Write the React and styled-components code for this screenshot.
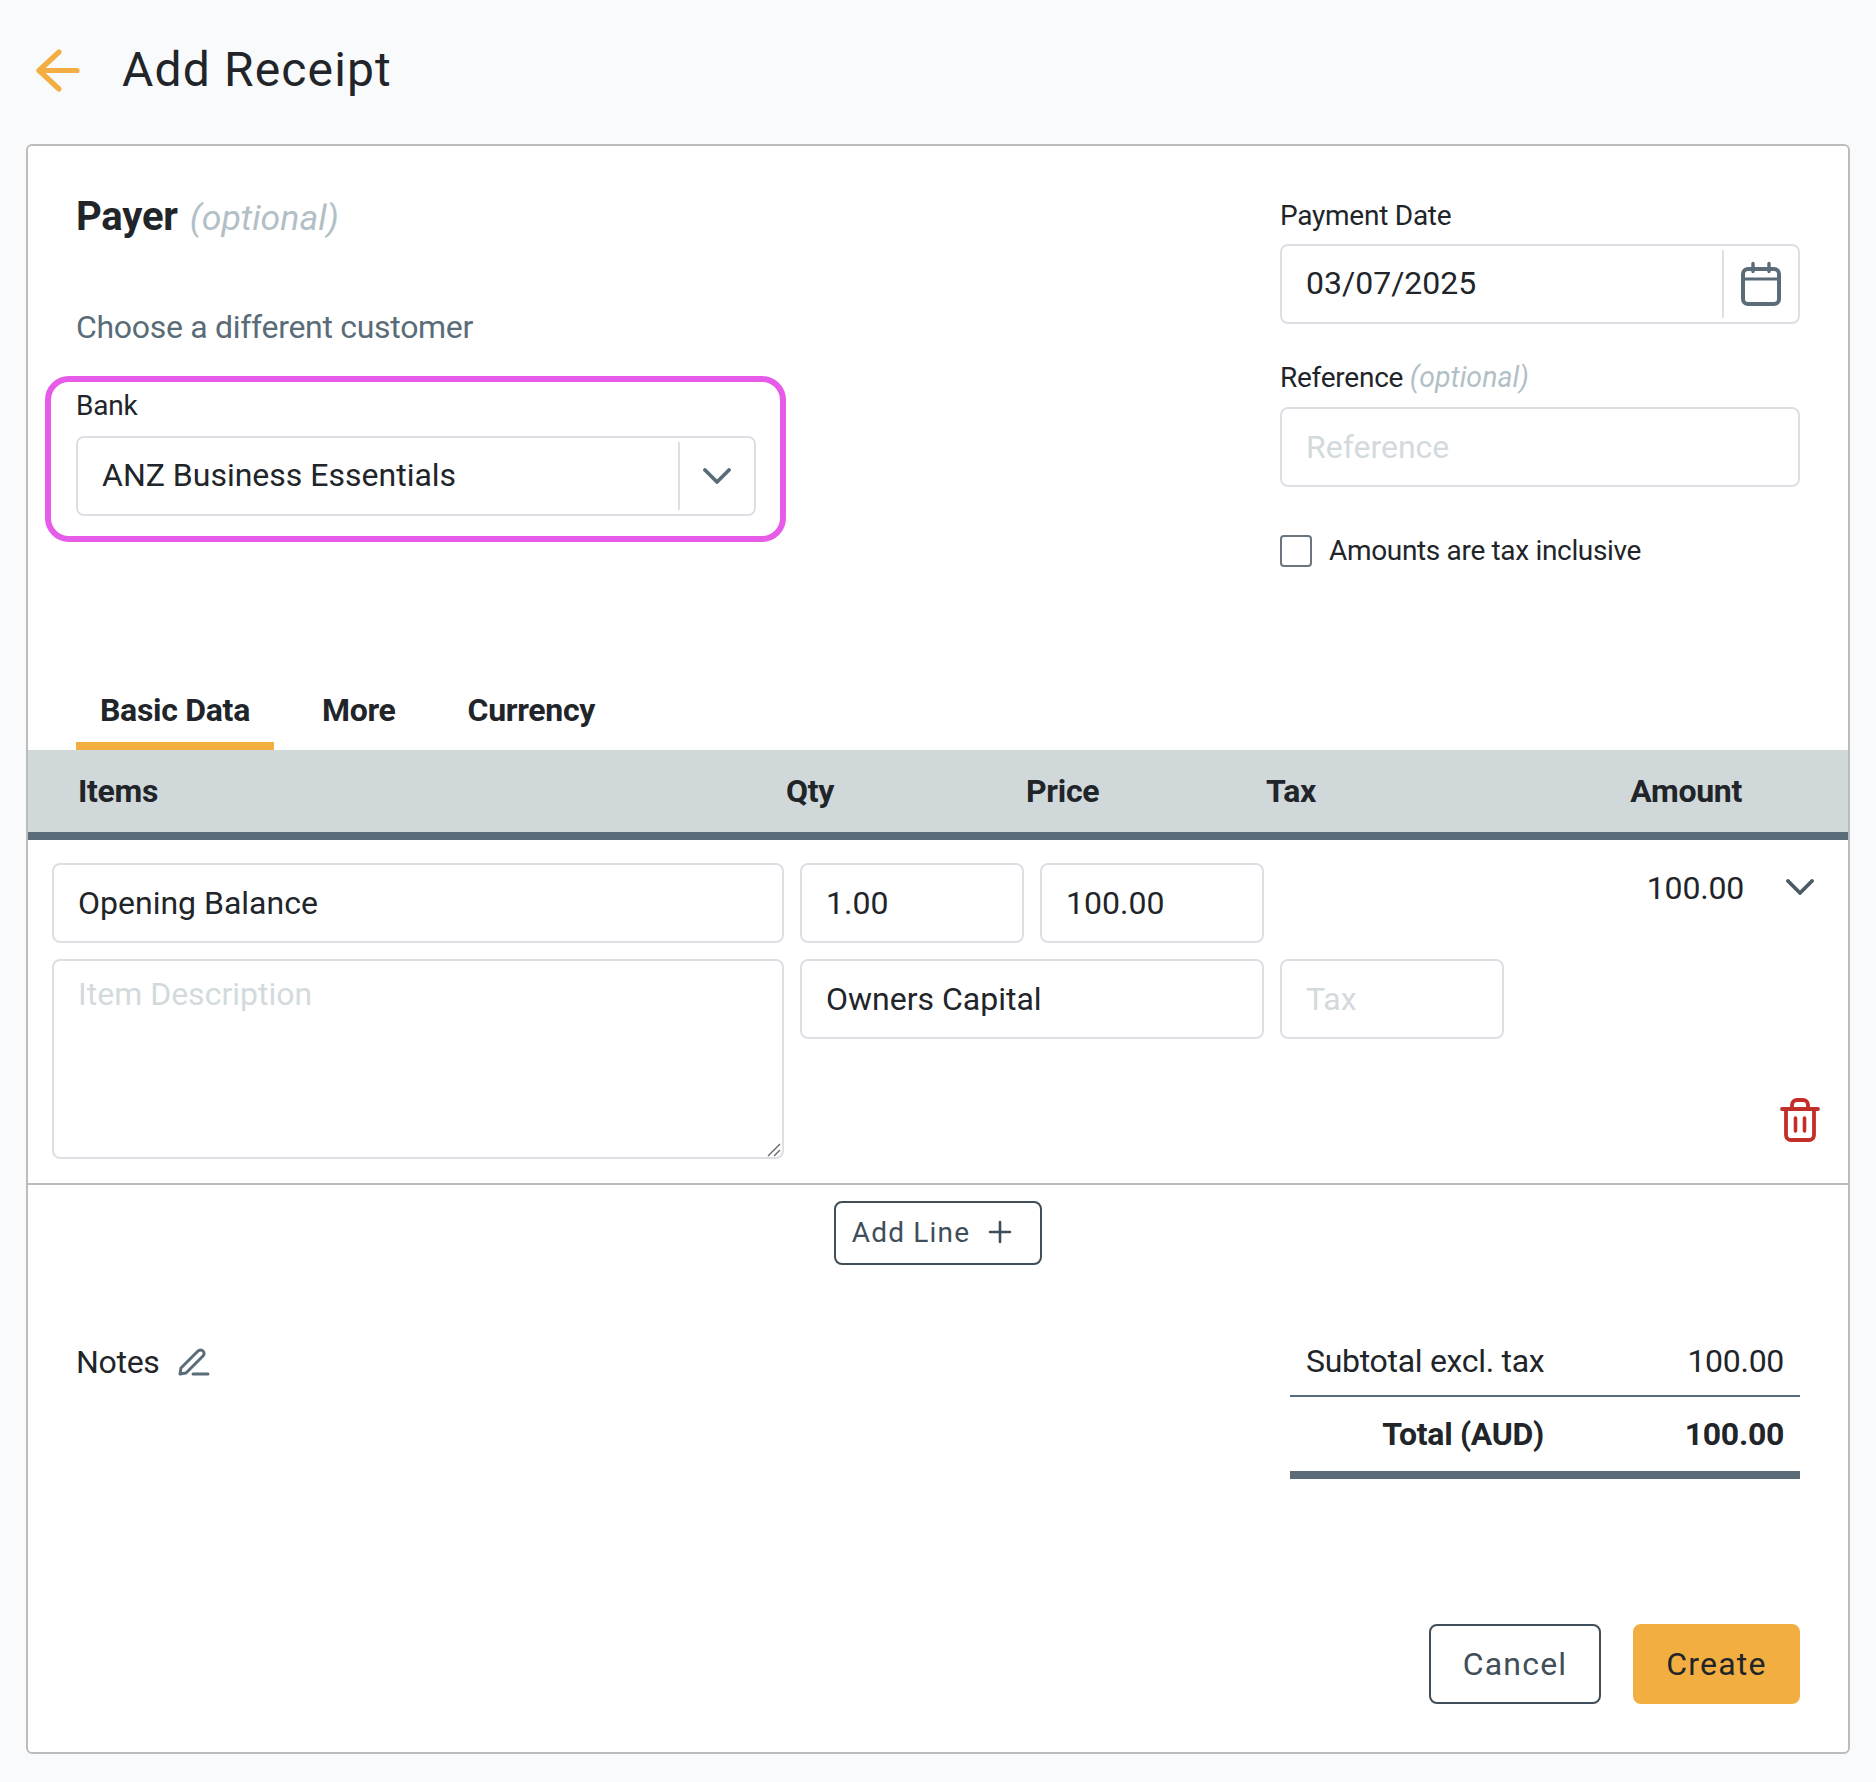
import React from "react";
import styled, { createGlobalStyle } from "styled-components";

const Global = createGlobalStyle`
  html, body { margin: 0; padding: 0; background: #f9fafb; }
  * { box-sizing: border-box; }
  body { font-family: Roboto, "Liberation Sans", sans-serif; color: #212529; }
  input::placeholder, textarea::placeholder { color: #d3dadd; opacity: 1; }
`;

const Page = styled.div`
  width: 1876px;
  height: 1782px;
  padding: 0 26px;
`;
const Header = styled.header`
  height: 144px;
  display: flex;
  align-items: center;
  padding: 0 0 5px 9px;
  gap: 41px;
`;
const Title = styled.h1`
  margin: 0;
  font-size: 48px;
  font-weight: 400;
  line-height: 56px;
  letter-spacing: 1.15px;
`;
const Card = styled.main`
  height: 1610px;
  background: #fff;
  border: 2px solid #bcbcbc;
  border-radius: 6px;
  display: flex;
  flex-direction: column;
`;
const Top = styled.section`
  height: 604px;
  padding: 0 48px;
  display: flex;
  justify-content: space-between;
`;
const LeftCol = styled.div`
  width: 740px;
  padding-top: 47px;
`;
const RightCol = styled.div`
  width: 520px;
  padding-top: 53px;
`;
const SectionTitle = styled.h2`
  margin: 0;
  font-size: 40px;
  font-weight: 700;
  line-height: 48px;
  letter-spacing: -0.2px;
  display: flex;
  align-items: baseline;
  gap: 12px;
`;
const Optional = styled.em`
  font-weight: 400;
  font-style: italic;
  color: #b2bfc6;
  letter-spacing: 0;
  font-size: ${(p) => p.$size || 35.7}px;
`;
const Choose = styled.a`
  display: block;
  margin: 65px 0 0;
  font-size: 32px;
  line-height: 40px;
  letter-spacing: -0.3px;
  color: #5a6c78;
`;
const Highlight = styled.div`
  margin: 29px 0 0 -31px;
  width: 741px;
  height: 166px;
  border: 6px solid #e65be8;
  border-radius: 24px;
  padding: 7px 24px 0 25px;
`;
const Label = styled.label`
  display: block;
  font-size: 28px;
  line-height: 34px;
  letter-spacing: -0.25px;
  margin-bottom: ${(p) => p.$mb || 11}px;
`;
const FieldBox = styled.div`
  height: 80px;
  display: flex;
  align-items: center;
  border: 2px solid #dcdfe4;
  border-radius: 8px;
  background: #fff;
  padding: 4px 0;
`;
const FieldValue = styled.span`
  flex: 1;
  padding: 0 0 2px 24px;
  font-size: 32px;
  line-height: 40px;
`;
const Addon = styled.span`
  height: 100%;
  width: ${(p) => p.$w}px;
  border-left: 2px solid #dcdfe4;
  display: flex;
  align-items: center;
  justify-content: center;
`;
const TextInput = styled.input`
  display: block;
  width: 100%;
  height: 80px;
  border: 2px solid #dcdfe4;
  border-radius: 8px;
  background: #fff;
  padding: 0 24px;
  font: 400 32px Roboto, sans-serif;
  color: #212529;
  outline: none;
`;
const FieldGroup = styled.div`
  margin-top: ${(p) => p.$mt || 0}px;
`;
const CheckRow = styled.label`
  display: flex;
  align-items: center;
  gap: 17px;
  margin-top: 48px;
  font-size: 28px;
  line-height: 32px;
  letter-spacing: -0.33px;
`;
const CheckBox = styled.span`
  width: 32px;
  height: 32px;
  border: 2px solid #6c757d;
  border-radius: 4px;
  background: #fff;
`;
const TabBar = styled.div`
  display: flex;
  gap: 24px;
  padding-left: 48px;
  height: 74px;
  margin-top: -74px;
`;
const Tab = styled.div`
  padding: 0 24px;
  font-size: 32px;
  font-weight: 700;
  line-height: 68px;
  letter-spacing: -0.3px;
  border-bottom: 8px solid ${(p) => (p.$active ? "#f2ae40" : "transparent")};
`;
const TableHead = styled.div`
  height: 90px;
  background: #d0d8d9;
  border-bottom: 8px solid #5a6c78;
  display: grid;
  grid-template-columns: 708px 240px 240px 1fr auto;
  align-items: center;
  padding: 0 106px 0 50px;
  font-size: 32px;
  font-weight: 700;
  letter-spacing: -0.3px;
`;
const LineGrid = styled.div`
  display: grid;
  grid-template-columns: 732px 224px 224px 224px 1fr;
  grid-template-rows: 80px 200px;
  column-gap: 16px;
  row-gap: 16px;
  padding: 23px 28px 24px 24px;
  border-bottom: 2px solid #bcbcbc;
`;
const AmountCell = styled.div`
  grid-column: 4 / span 2;
  display: flex;
  justify-content: flex-end;
  align-items: flex-start;
  font-size: 32px;
  line-height: 40px;
  letter-spacing: -0.2px;
  gap: 42px;
  padding: 5px 6px 0 0;
`;
const ChevronWrap = styled.span`
  margin-top: 11px;
  display: flex;
`;
const DescWrap = styled.div`
  position: relative;
`;
const Description = styled.textarea`
  display: block;
  width: 100%;
  height: 200px;
  border: 2px solid #dcdfe4;
  border-radius: 8px;
  padding: 14px 24px;
  font: 400 32px Roboto, sans-serif;
  outline: none;
  resize: none;
`;
const Grip = styled.svg`
  position: absolute;
  right: 3px;
  bottom: 2px;
`;
const WideCell = styled.div`
  grid-column: 2 / span 2;
`;
const TrashCell = styled.div`
  display: flex;
  justify-content: flex-end;
  align-items: flex-end;
  padding: 0 0 17px 0;
`;
const AddRow = styled.div`
  display: flex;
  justify-content: center;
  padding-top: 16px;
`;
const Button = styled.button`
  border: 2px solid ${(p) => (p.$primary ? "#f2ae40" : "#3f4e58")};
  background: ${(p) => (p.$primary ? "#f2ae40" : "#fff")};
  color: ${(p) => (p.$primary ? "#212529" : "#3f4e58")};
  border-radius: 8px;
  font-family: Roboto, sans-serif;
  font-weight: 400;
  letter-spacing: 1.2px;
  display: flex;
  align-items: center;
  justify-content: center;
  padding: 0;
`;
const AddButton = styled(Button)`
  width: 208px;
  height: 64px;
  font-size: 28px;
  gap: 18px;
  padding: 0 12px 2px 0;
`;
const ActionButton = styled(Button)`
  width: ${(p) => p.$w}px;
  height: 80px;
  font-size: 32px;
`;
const Lower = styled.section`
  display: flex;
  justify-content: space-between;
  align-items: flex-start;
  padding: 64px 48px 0;
`;
const NotesRow = styled.div`
  display: flex;
  align-items: center;
  gap: 18px;
  margin-top: 13px;
  font-size: 32px;
  line-height: 40px;
  letter-spacing: -0.3px;
  height: 40px;
`;
const Totals = styled.div`
  width: 510px;
`;
const TotalRow = styled.div`
  display: grid;
  grid-template-columns: 254px 240px;
  height: ${(p) => p.$h}px;
  padding-bottom: ${(p) => p.$pb || 0}px;
  align-items: center;
  font-size: 32px;
  font-weight: ${(p) => (p.$bold ? 700 : 400)};
  letter-spacing: -0.3px;
  white-space: nowrap;
  border-bottom: ${(p) => p.$rule}px solid #5a6c78;
`;
const TotalLabel = styled.span`
  padding-left: 16px;
  text-align: ${(p) => (p.$right ? "right" : "left")};
`;
const TotalValue = styled.span`
  text-align: right;
`;
const Actions = styled.div`
  margin-top: auto;
  display: flex;
  justify-content: flex-end;
  gap: 32px;
  padding: 0 48px 48px 0;
`;

const Stroke = (p) => (
  <svg fill="none" strokeLinecap="round" strokeLinejoin="round" {...p} />
);

export default function App() {
  return (
    <Page>
      <Global />
      <Header>
        <Stroke width="46" height="46" viewBox="0 0 46 46" stroke="#f2ae40" strokeWidth="5.2">
          <path d="M24 5 4 23.5l20 18.5M4 23.5h38" />
        </Stroke>
        <Title>Add Receipt</Title>
      </Header>
      <Card>
        <Top>
          <LeftCol>
            <SectionTitle>
              Payer <Optional>(optional)</Optional>
            </SectionTitle>
            <Choose>Choose a different customer</Choose>
            <Highlight>
              <Label $mb={13}>Bank</Label>
              <FieldBox>
                <FieldValue>ANZ Business Essentials</FieldValue>
                <Addon $w={76}>
                  <Stroke width="28" height="16" viewBox="0 0 28 16" stroke="#5a6c78" strokeWidth="3.8">
                    <path d="m2 2 12 12L26 2" />
                  </Stroke>
                </Addon>
              </FieldBox>
            </Highlight>
          </LeftCol>
          <RightCol>
            <Label>Payment Date</Label>
            <FieldBox>
              <FieldValue>03/07/2025</FieldValue>
              <Addon $w={76}>
                <Stroke width="40" height="46" viewBox="0 0 40 46" stroke="#5a6c78" strokeWidth="4">
                  <rect x="2" y="8" width="36" height="35" rx="5" />
                  <path d="M2 18h36" strokeWidth="3" />
                  <path d="M12 2.5v8M28 2.5v8" strokeWidth="3.4" />
                </Stroke>
              </Addon>
            </FieldBox>
            <FieldGroup $mt={37}>
              <Label $mb={12}>
                Reference <Optional $size={28.5}>(optional)</Optional>
              </Label>
              <TextInput placeholder="Reference" readOnly />
            </FieldGroup>
            <CheckRow>
              <CheckBox />
              Amounts are tax inclusive
            </CheckRow>
          </RightCol>
        </Top>
        <TabBar>
          <Tab $active>Basic Data</Tab>
          <Tab>More</Tab>
          <Tab>Currency</Tab>
        </TabBar>
        <TableHead>
          <span>Items</span>
          <span>Qty</span>
          <span>Price</span>
          <span>Tax</span>
          <span>Amount</span>
        </TableHead>
        <LineGrid>
          <TextInput value="Opening Balance" readOnly />
          <TextInput value="1.00" readOnly />
          <TextInput value="100.00" readOnly />
          <AmountCell>
            100.00
            <ChevronWrap>
              <Stroke width="28" height="16" viewBox="0 0 28 16" stroke="#4b5c67" strokeWidth="3.8">
                <path d="m2 2 12 12L26 2" />
              </Stroke>
            </ChevronWrap>
          </AmountCell>
          <DescWrap>
            <Description placeholder="Item Description" readOnly />
            <Grip width="14" height="14" viewBox="0 0 14 14" stroke="#666" strokeWidth="1.4" fill="none">
              <path d="M1 13 13 1M7 13l6-6" />
            </Grip>
          </DescWrap>
          <WideCell>
            <TextInput value="Owners Capital" readOnly />
          </WideCell>
          <TextInput placeholder="Tax" readOnly />
          <TrashCell>
            <Stroke width="40" height="44" viewBox="0 0 40 44" stroke="#c22f2a" strokeWidth="3.8">
              <path d="M2 11h36M12 11V7a5 5 0 0 1 5-5h6a5 5 0 0 1 5 5v4M6 11v26a5 5 0 0 0 5 5h18a5 5 0 0 0 5-5V11" />
              <path d="M15.5 20v13M24.5 20v13" strokeWidth="3.6" />
            </Stroke>
          </TrashCell>
        </LineGrid>
        <AddRow>
          <AddButton>
            Add Line
            <Stroke width="24" height="24" viewBox="0 0 24 24" stroke="#3f4e58" strokeWidth="2.6">
              <path d="M12 2v20M2 12h20" />
            </Stroke>
          </AddButton>
        </AddRow>
        <Lower>
          <NotesRow>
            Notes
            <Stroke width="32" height="30" viewBox="0 0 32 30" stroke="#5a6c78" strokeWidth="3">
              <path d="M3 21 20 4a3.4 3.4 0 0 1 5 0 3.4 3.4 0 0 1 0 5L8 26l-6 1zM15 27h15" />
            </Stroke>
          </NotesRow>
          <Totals>
            <TotalRow $h={68} $pb={2} $rule={2}>
              <TotalLabel>Subtotal excl. tax</TotalLabel>
              <TotalValue>100.00</TotalValue>
            </TotalRow>
            <TotalRow $h={82} $rule={8} $bold>
              <TotalLabel $right>Total (AUD)</TotalLabel>
              <TotalValue>100.00</TotalValue>
            </TotalRow>
          </Totals>
        </Lower>
        <Actions>
          <ActionButton $w={172}>Cancel</ActionButton>
          <ActionButton $w={167} $primary>Create</ActionButton>
        </Actions>
      </Card>
    </Page>
  );
}
